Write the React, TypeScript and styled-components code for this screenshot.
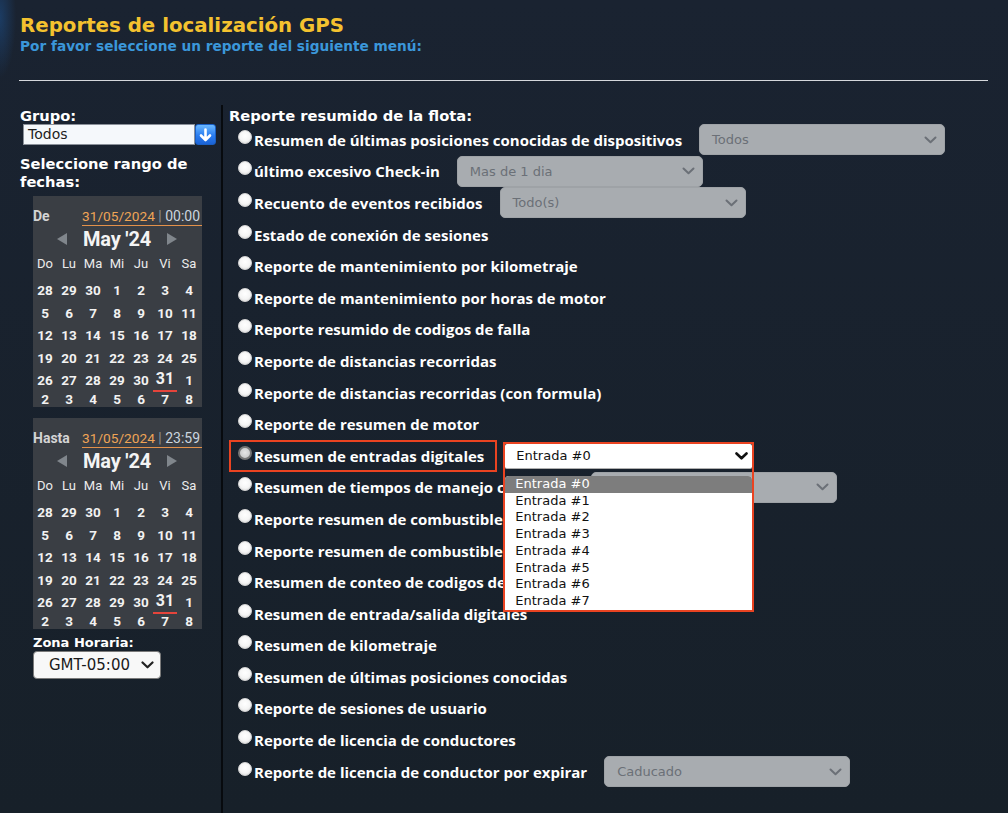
import React from "react";
import styled, { createGlobalStyle } from "styled-components";

const VERDANA = `"DejaVu Sans", Verdana, sans-serif`;
const OPEN = `"Open Sans", "Noto Sans", sans-serif`;
const ROBOTO = `Roboto, "Noto Sans", sans-serif`;

const GlobalStyle = createGlobalStyle`
  html, body { margin: 0; padding: 0; background: #19222f; }
  body { overflow: hidden; }
  * { box-sizing: border-box; }
`;

const Page = styled.div`
  width: 1008px;
  height: 813px;
  overflow: hidden;
  background:
    radial-gradient(ellipse 16px 60px at 0 18px, rgba(30, 90, 160, 0.45), transparent),
    linear-gradient(180deg, #1a2331 0%, #172029 100%);
  display: flex;
  flex-direction: column;
`;

const Header = styled.header`
  padding: 14px 20px 0 20px;
`;

const Title = styled.h1`
  margin: 0;
  font: bold 19.8px/24px ${VERDANA};
  color: #f4c22f;
`;

const Subtitle = styled.p`
  margin: 0;
  font: bold 13.7px/16px ${VERDANA};
  color: #3b97da;
`;

const Rule = styled.hr`
  margin: 26px 20px 0 19px;
  border: 0;
  height: 1px;
  background: #d5d8dc;
`;

const Main = styled.div`
  margin-top: 24px;
  flex: 1;
  display: flex;
`;

const Sidebar = styled.aside`
  width: 223px;
  flex: none;
  padding: 2px 0 0 20px;
  border-right: 2px solid #070a0e;
  display: flex;
  flex-direction: column;
  align-items: flex-start;
`;

const SideLabel = styled.div<{ $top?: number }>`
  margin-top: ${(p) => p.$top ?? 0}px;
  font: bold 14.7px/17px ${VERDANA};
  color: #ffffff;
`;

const RangeLabel = styled(SideLabel)`
  line-height: 18px;
`;

const ZoneLabel = styled(SideLabel)`
  font-size: 13px;
  line-height: 16px;
  margin-left: 13px;
`;

const GroupRow = styled.div`
  display: flex;
  margin-left: 3px;
  height: 21px;
`;

const GroupField = styled.div`
  width: 172px;
  height: 21px;
  border: 1px solid #8a9099;
  background: #f5f8fb;
  font: 14px/19px ${VERDANA};
  color: #1e1e1e;
  padding-left: 4px;
`;

const BlueButton = styled.div`
  width: 21px;
  height: 21px;
  border-radius: 3px;
  border: 1px solid #1a5fc4;
  background: linear-gradient(180deg, #6ab8ff 0%, #2a7df0 55%, #1b63d6 100%);
  display: flex;
  align-items: center;
  justify-content: center;
`;

const Calendar = styled.div<{ $top: number }>`
  margin: ${(p) => p.$top}px 0 0 13px;
  width: 169px;
  background: #3a3e44;
  padding-top: 11px;
  font-family: ${ROBOTO};
  color: #f1f1f1;
`;

const CalTop = styled.div`
  display: flex;
  height: 19px;
`;

const CalTag = styled.span`
  width: 49px;
  font: bold 14px/18px ${ROBOTO};
  color: #d4d4d4;
`;

const CalDate = styled.span`
  flex: 1;
  border-bottom: 1px solid #e3914a;
  font: 14px/18px ${ROBOTO};
  white-space: nowrap;
`;

const DateText = styled.span`
  color: #efa456;
  font-size: 13.7px;
`;

const Sep = styled.span`
  color: #8e9298;
`;

const TimeText = styled.span`
  color: #cbd5df;
`;

const MonthBar = styled.div`
  display: flex;
  align-items: center;
  height: 26px;
  padding: 0 25px 0 24px;
`;

const MonthName = styled.span`
  flex: 1;
  text-align: center;
  font: bold 20px/26px ${ROBOTO};
  color: #f4f4f4;
  letter-spacing: -0.2px;
`;

const WeekHead = styled.div`
  display: grid;
  grid-template-columns: repeat(7, 24px);
  height: 24px;
  align-items: center;
  font: 13px/24px ${ROBOTO};
  color: #ececec;
  text-align: center;
`;

const DayGrid = styled.div`
  display: grid;
  grid-template-columns: repeat(7, 24px);
  grid-template-rows: repeat(5, 22.5px) 15.5px;
  margin-top: 3px;
`;

const Day = styled.span<{ $today?: boolean; $short?: boolean }>`
  text-align: center;
  font-family: ${ROBOTO};
  font-weight: bold;
  font-size: ${(p) => (p.$today ? 16 : 13.5)}px;
  line-height: ${(p) => (p.$short ? 15.5 : p.$today ? 20.5 : 22.5)}px;
  color: #f2f2f2;
  border-bottom: ${(p) => (p.$today ? "2px solid #e5443b" : "0")};
`;

const ZoneSelect = styled.div`
  margin-left: 13px;
  width: 128px;
  height: 28px;
  border: 1px solid #7a7a7a;
  border-radius: 4px;
  background: #f8f8f8;
  display: flex;
  align-items: center;
  justify-content: space-between;
  padding: 0 6px 0 15px;
  font: 15px ${VERDANA};
  color: #1a1a1a;
`;

const Content = styled.section`
  flex: 1;
  padding: 2px 0 0 6px;
`;

const SectionTitle = styled.h3`
  margin: 0;
  font: bold 14.7px/17px ${VERDANA};
  color: #ffffff;
`;

const ReportList = styled.div`
  display: flex;
  flex-direction: column;
`;

const Row = styled.div<{ $framed?: boolean }>`
  display: flex;
  align-items: center;
  height: 31.6px;
  padding-left: ${(p) => (p.$framed ? 0 : 9)}px;
`;

const FramedLabel = styled.div`
  display: flex;
  align-items: center;
  height: 100%;
  border: 2px solid #ea4321;
  padding: 0 11px 0 7px;
`;

const RadioDot = styled.span<{ $focus?: boolean }>`
  width: 14px;
  height: 14px;
  flex: none;
  border-radius: 50%;
  margin: 0 2px 6px 0;
  background: ${(p) =>
    p.$focus
      ? "radial-gradient(circle at 50% 45%, #e6e6e6 0%, #cfcfcf 60%, #bdbdbd 100%)"
      : "radial-gradient(circle at 50% 40%, #ffffff 0%, #f5f5f5 55%, #d2d2d2 100%)"};
  border: ${(p) => (p.$focus ? "2px solid #767676" : "1px solid #d8d8d8")};
`;

const Label = styled.span`
  font: 700 15px/20px ${OPEN};
  color: #ffffff;
  white-space: nowrap;
`;

const DisabledSelect = styled.div`
  flex: none;
  margin-left: 17px;
  width: 246px;
  height: 31px;
  display: flex;
  align-items: center;
  justify-content: space-between;
  padding: 0 7px 0 12px;
  border-radius: 5px;
  border: 1px solid #9ea2a6;
  background: #a8acb0;
  color: #6b7077;
  font: 13px ${VERDANA};
`;

const DropAnchor = styled.div`
  position: relative;
  align-self: flex-start;
  margin: 2px 0 0 6px;
  width: 251px;
  height: 29px;
  z-index: 10;
`;

const DropFrame = styled.div`
  position: absolute;
  top: 0;
  left: 0;
  width: 251px;
  height: 170px;
  border: 2px solid #ea4321;
  display: flex;
  flex-direction: column;
  gap: 7px;
`;

const OpenSelect = styled.div`
  height: 25px;
  flex: none;
  background: #ffffff;
  border-bottom: 1px solid #b0b0b0;
  border-radius: 2px;
  display: flex;
  align-items: center;
  justify-content: space-between;
  padding: 0 4px 0 11px;
  font: 13px ${VERDANA};
  color: #111111;
`;

const OptionList = styled.div`
  height: 134px;
  background: #ffffff;
  border-radius: 4px 4px 0 0;
  display: flex;
  flex-direction: column;
  overflow: hidden;
`;

const Option = styled.div<{ $active?: boolean }>`
  height: 16.75px;
  padding-left: 10px;
  font: 13px/16.75px ${VERDANA};
  color: ${(p) => (p.$active ? "#ffffff" : "#111111")};
  background: ${(p) => (p.$active ? "#7d7d7d" : "#ffffff")};
`;

const Chevron = ({ color, stroke = 2 }: { color: string; stroke?: number }) => (
  <svg width="13" height="8" viewBox="0 0 13 8">
    <polyline
      points="1.5,1.5 6.5,6.3 11.5,1.5"
      fill="none"
      stroke={color}
      strokeWidth={stroke}
      strokeLinecap="round"
      strokeLinejoin="round"
    />
  </svg>
);

const Triangle = ({ dir }: { dir: "left" | "right" }) => (
  <svg width="10" height="12" viewBox="0 0 10 12">
    <polygon points={dir === "left" ? "10,0 10,12 0,6" : "0,0 0,12 10,6"} fill="#80868c" />
  </svg>
);

const DownArrow = () => (
  <svg width="13" height="14" viewBox="0 0 13 14">
    <path d="M6.5 1.5 V11.5 M2 7.5 L6.5 12 L11 7.5" fill="none" stroke="#ffffff" strokeWidth="2.6" strokeLinecap="round" strokeLinejoin="round" />
  </svg>
);

const weeks = [
  [28, 29, 30, 1, 2, 3, 4],
  [5, 6, 7, 8, 9, 10, 11],
  [12, 13, 14, 15, 16, 17, 18],
  [19, 20, 21, 22, 23, 24, 25],
  [26, 27, 28, 29, 30, 31, 1],
  [2, 3, 4, 5, 6, 7, 8],
];

const dayNames = ["Do", "Lu", "Ma", "Mi", "Ju", "Vi", "Sa"];

const MiniCalendar = ({ tag, time, top }: { tag: string; time: string; top: number }) => (
  <Calendar $top={top}>
    <CalTop>
      <CalTag>{tag}</CalTag>
      <CalDate>
        <DateText>31/05/2024</DateText> <Sep>|</Sep> <TimeText>{time}</TimeText>
      </CalDate>
    </CalTop>
    <MonthBar>
      <Triangle dir="left" />
      <MonthName>May '24</MonthName>
      <Triangle dir="right" />
    </MonthBar>
    <WeekHead>
      {dayNames.map((d) => (
        <span key={d}>{d}</span>
      ))}
    </WeekHead>
    <DayGrid>
      {weeks.map((w, wi) =>
        w.map((d, di) => (
          <Day key={`${wi}-${di}`} $today={wi === 4 && di === 5} $short={wi === 5}>
            {d}
          </Day>
        ))
      )}
    </DayGrid>
  </Calendar>
);

type Report = { label: string; select?: string };

const reports: Report[] = [
  { label: "Resumen de últimas posiciones conocidas de dispositivos", select: "Todos" },
  { label: "último excesivo Check-in", select: "Mas de 1 dia" },
  { label: "Recuento de eventos recibidos", select: "Todo(s)" },
  { label: "Estado de conexión de sesiones" },
  { label: "Reporte de mantenimiento por kilometraje" },
  { label: "Reporte de mantenimiento por horas de motor" },
  { label: "Reporte resumido de codigos de falla" },
  { label: "Reporte de distancias recorridas" },
  { label: "Reporte de distancias recorridas (con formula)" },
  { label: "Reporte de resumen de motor" },
  { label: "Resumen de entradas digitales" },
  { label: "Resumen de tiempos de manejo conductor", select: "Todos" },
  { label: "Reporte resumen de combustible" },
  { label: "Reporte resumen de combustible por tanque" },
  { label: "Resumen de conteo de codigos de falla" },
  { label: "Resumen de entrada/salida digitales" },
  { label: "Resumen de kilometraje" },
  { label: "Resumen de últimas posiciones conocidas" },
  { label: "Reporte de sesiones de usuario" },
  { label: "Reporte de licencia de conductores" },
  { label: "Reporte de licencia de conductor por expirar", select: "Caducado" },
];

const entradas = Array.from({ length: 8 }, (_, i) => `Entrada #${i}`);

export default function App() {
  return (
    <>
      <GlobalStyle />
      <Page>
        <Header>
          <Title>Reportes de localización GPS</Title>
          <Subtitle>Por favor seleccione un reporte del siguiente menú:</Subtitle>
        </Header>
        <Rule />
        <Main>
          <Sidebar>
            <SideLabel>Grupo:</SideLabel>
            <GroupRow>
              <GroupField>Todos</GroupField>
              <BlueButton>
                <DownArrow />
              </BlueButton>
            </GroupRow>
            <RangeLabel $top={10}>
              Seleccione rango de
              <br />
              fechas:
            </RangeLabel>
            <MiniCalendar tag="De" time="00:00" top={5} />
            <MiniCalendar tag="Hasta" time="23:59" top={11} />
            <ZoneLabel $top={6}>Zona Horaria:</ZoneLabel>
            <ZoneSelect>
              GMT-05:00
              <Chevron color="#222" stroke={2.2} />
            </ZoneSelect>
          </Sidebar>
          <Content>
            <SectionTitle>Reporte resumido de la flota:</SectionTitle>
            <ReportList>
              {reports.map((r, i) =>
                i === 10 ? (
                  <Row key={r.label} $framed>
                    <FramedLabel>
                      <RadioDot $focus />
                      <Label>{r.label}</Label>
                    </FramedLabel>
                    <DropAnchor>
                      <DropFrame>
                        <OpenSelect>
                          Entrada #0
                          <Chevron color="#111" stroke={2.6} />
                        </OpenSelect>
                        <OptionList>
                          {entradas.map((e, k) => (
                            <Option key={e} $active={k === 0}>
                              {e}
                            </Option>
                          ))}
                        </OptionList>
                      </DropFrame>
                    </DropAnchor>
                  </Row>
                ) : (
                  <Row key={r.label}>
                    <RadioDot />
                    <Label>{r.label}</Label>
                    {r.select && (
                      <DisabledSelect>
                        {r.select}
                        <Chevron color="#6b7077" />
                      </DisabledSelect>
                    )}
                  </Row>
                )
              )}
            </ReportList>
          </Content>
        </Main>
      </Page>
    </>
  );
}
